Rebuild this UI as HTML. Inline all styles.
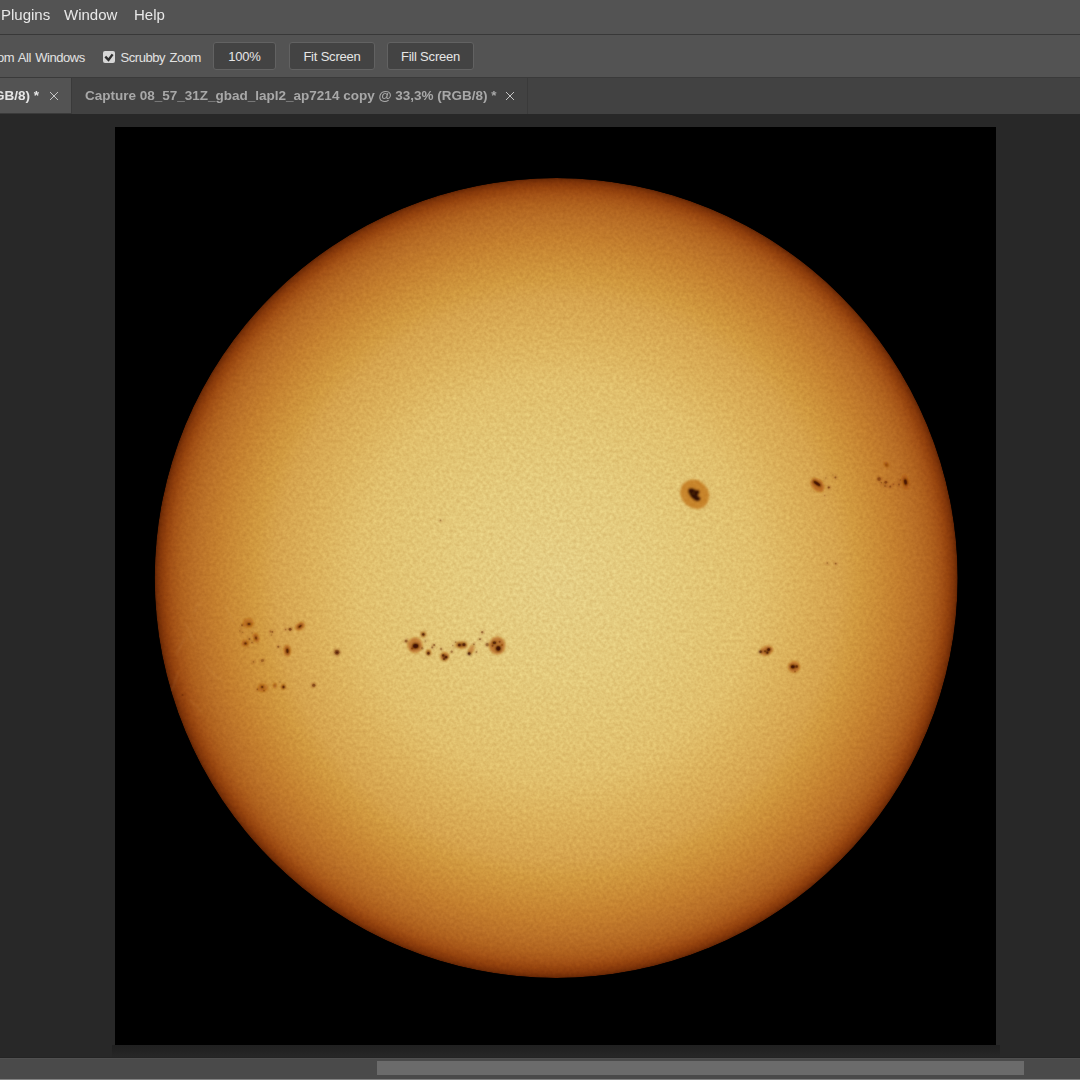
<!DOCTYPE html>
<html><head><meta charset="utf-8">
<style>
*{margin:0;padding:0;box-sizing:border-box}
html,body{width:1080px;height:1080px;overflow:hidden;background:#282828;font-family:"Liberation Sans",sans-serif;position:relative}
.abs{position:absolute}
#menu{left:0;top:0;width:1080px;height:34px;background:#535353}
#menuline{left:0;top:34px;width:1080px;height:1px;background:#383838}
#tool{left:0;top:35px;width:1080px;height:42px;background:#535353}
#toolline{left:0;top:77px;width:1080px;height:1px;background:#3a3a3a}
#tabs{left:0;top:78px;width:1080px;height:36px;background:#424242}
.mi{position:absolute;top:-2px;will-change:transform;height:34px;line-height:34px;font-size:15px;color:#e8e8e8;white-space:nowrap}
.tt{position:absolute;font-size:13px;letter-spacing:-0.45px;word-spacing:1.2px;color:#e2e2e2;white-space:nowrap}
.btn{position:absolute;top:42px;height:28px;border:1px solid #626262;border-radius:3px;background:#434343;color:#e6e6e6;font-size:13px;text-align:center;line-height:27px;letter-spacing:-0.2px}
.tab{position:absolute;will-change:transform;font-weight:bold;font-size:13.5px;white-space:nowrap}
#canvas{left:0;top:114px;width:1080px;height:944px;background:#282828}
#img{left:115px;top:127px;width:881px;height:918px;background:#000}
#scroll{left:0;top:1058px;width:1080px;height:21px;background:#4a4a4a}
#thumb{left:377px;top:1061px;width:647px;height:14px;background:#6b6b6b}
#bot{left:0;top:1079px;width:1080px;height:1px;background:#828282}
</style></head>
<body>
<div id="menu" class="abs"></div>
<div id="menuline" class="abs"></div>
<div class="mi" style="left:1px">Plugins</div>
<div class="mi" style="left:64px">Window</div>
<div class="mi" style="left:134px">Help</div>
<div id="tool" class="abs"></div>
<div id="toolline" class="abs"></div>
<div class="tt" style="left:-3px;top:50px">om All Windows</div>
<div class="abs" style="left:103px;top:51px;width:12px;height:12px;background:#d6d6d6;border-radius:2px"></div>
<svg class="abs" style="left:103px;top:51px" width="12" height="12" viewBox="0 0 12 12"><path d="M2.3 5.7 L5.5 8.9 L9.6 3.4" stroke="#2e2e2e" stroke-width="2.4" stroke-linejoin="miter" fill="none"/></svg>
<div class="tt" style="left:120.5px;top:50px">Scrubby Zoom</div>
<div class="btn" style="left:213px;width:63px">100%</div>
<div class="btn" style="left:289px;width:86px">Fit Screen</div>
<div class="btn" style="left:387px;width:87px">Fill Screen</div>
<div id="tabs" class="abs"></div>
<div class="abs" style="left:0;top:78px;width:71px;height:35px;background:#535353"></div>
<div class="abs" style="left:71px;top:78px;width:1px;height:36px;background:#3a3a3a"></div>
<div class="abs" style="left:527px;top:78px;width:1px;height:36px;background:#3a3a3a"></div>
<div class="abs" style="left:0;top:113px;width:72px;height:1px;background:#3a3a3a"></div>
<div class="tab" style="left:-6px;top:88px;color:#e6e6e6">GB/8) *</div>
<svg class="abs" style="left:50px;top:92px" width="8" height="8" viewBox="0 0 8 8" fill="#c4c4c4"><rect x="0" y="0" width="1" height="1"/><rect x="7" y="0" width="1" height="1"/><rect x="1" y="1" width="1" height="1"/><rect x="6" y="1" width="1" height="1"/><rect x="2" y="2" width="1" height="1"/><rect x="5" y="2" width="1" height="1"/><rect x="3" y="3" width="1" height="1"/><rect x="4" y="3" width="1" height="1"/><rect x="4" y="4" width="1" height="1"/><rect x="3" y="4" width="1" height="1"/><rect x="5" y="5" width="1" height="1"/><rect x="2" y="5" width="1" height="1"/><rect x="6" y="6" width="1" height="1"/><rect x="1" y="6" width="1" height="1"/><rect x="7" y="7" width="1" height="1"/><rect x="0" y="7" width="1" height="1"/></svg>
<div class="tab" style="left:85px;top:88px;color:#a8a8a8">Capture 08_57_31Z_gbad_lapl2_ap7214 copy @ 33,3% (RGB/8) *</div>
<svg class="abs" style="left:506px;top:92px" width="8" height="8" viewBox="0 0 8 8" fill="#c4c4c4"><rect x="0" y="0" width="1" height="1"/><rect x="7" y="0" width="1" height="1"/><rect x="1" y="1" width="1" height="1"/><rect x="6" y="1" width="1" height="1"/><rect x="2" y="2" width="1" height="1"/><rect x="5" y="2" width="1" height="1"/><rect x="3" y="3" width="1" height="1"/><rect x="4" y="3" width="1" height="1"/><rect x="4" y="4" width="1" height="1"/><rect x="3" y="4" width="1" height="1"/><rect x="5" y="5" width="1" height="1"/><rect x="2" y="5" width="1" height="1"/><rect x="6" y="6" width="1" height="1"/><rect x="1" y="6" width="1" height="1"/><rect x="7" y="7" width="1" height="1"/><rect x="0" y="7" width="1" height="1"/></svg>
<div id="canvas" class="abs"></div>
<div class="abs" style="left:112px;top:1045px;width:888px;height:12px;background:linear-gradient(#202020,#232323 50%,#272727)"></div>
<div id="img" class="abs"></div>
<svg class="abs" style="left:0;top:0" width="1080" height="1080" viewBox="0 0 1080 1080">
<defs>
<radialGradient id="sun" cx="556.2" cy="578" r="401.5" gradientUnits="userSpaceOnUse" gradientTransform="translate(556.2 578) scale(1 0.9963) translate(-556.2 -578)">
<stop offset="0" stop-color="#e5ce85"/>
<stop offset="0.25" stop-color="#e4ca7c"/>
<stop offset="0.4" stop-color="#e2c473"/>
<stop offset="0.5" stop-color="#e1bf6c"/>
<stop offset="0.6" stop-color="#dcb25c"/>
<stop offset="0.7" stop-color="#d6a44e"/>
<stop offset="0.75" stop-color="#d19a40"/>
<stop offset="0.8" stop-color="#cb8d37"/>
<stop offset="0.85" stop-color="#c47f2e"/>
<stop offset="0.9" stop-color="#ba7027"/>
<stop offset="0.935" stop-color="#b0621e"/>
<stop offset="0.96" stop-color="#a45216"/>
<stop offset="0.975" stop-color="#96440e"/>
<stop offset="0.987" stop-color="#86380a"/>
<stop offset="0.995" stop-color="#742e06"/>
<stop offset="1" stop-color="#602204"/>
</radialGradient>
<filter id="soft" x="-20%" y="-20%" width="140%" height="140%"><feGaussianBlur stdDeviation="0.8"/></filter>
<filter id="grain" x="0" y="0" width="100%" height="100%" color-interpolation-filters="sRGB"><feTurbulence type="fractalNoise" baseFrequency="0.3" numOctaves="2" seed="7" result="n"/><feColorMatrix in="n" type="matrix" values="0.6 0 0 0 0.2  1 0 0 0 0  1.6 0 0 0 -0.3  0 0 0 0 1" result="g"/><feComposite in="SourceGraphic" in2="g" operator="arithmetic" k1="0.2" k2="0.9" k3="0" k4="0" result="m"/><feComposite in="m" in2="SourceAlpha" operator="in"/></filter>
</defs>
<ellipse cx="556.2" cy="578" rx="401.5" ry="400" fill="url(#sun)" filter="url(#grain)"/>
<g fill="none" stroke="#f0c878" stroke-opacity="0.12" stroke-width="1.6" stroke-linecap="round" filter="url(#soft)">
<path d="M176.7 654 Q180 645 185 638"/>
<path d="M185 623 Q190 632 193 641"/>
<path d="M206 666 Q214 674 222 681"/>
<path d="M225 606 Q229 613 233 621"/>
<path d="M194 612 Q197 606 201 602"/>
<path d="M172 690 Q176 680 178 672"/>
<path d="M190 700 Q196 706 202 712"/>
</g>
<circle cx="182.5" cy="695" r="1" fill="#6a2806" fill-opacity="0.5"/>
<g filter="url(#soft)">
<path d="M680.2 490.7 L682.4 484.4 L687.2 481 L691.7 479.6 L698 479.9 L702.8 483.3 L707.6 488.8 L709.4 494.7 L708.3 501.8 L704.6 506.6 L698 509.2 L691.7 508.1 L686.1 504.7 L682.4 499.9 L680.6 495.5 Z" fill="#b8600a" fill-opacity="0.62"/>
<path d="M688.22 489.56 L689.81 488.26 L692.78 488.26 L695 489.56 L696.11 490.3 L697.22 489.74 L699.07 490.3 L699.63 492.52 L698.7 494.37 L697.22 495.3 L698.7 496.22 L700.37 497.7 L700.56 499.56 L699.07 501.04 L696.48 501.22 L693.52 499.56 L690.93 496.96 L689.07 494 L688.15 491.41 Z" fill="#2a0802" fill-opacity="0.96"/>
<path d="M691.85 493.63 L695 492.7" stroke="#a0581c" stroke-opacity="0.55" stroke-width="0.9"/>
<ellipse cx="817.5" cy="485" rx="8" ry="5.5" fill="#b0580c" fill-opacity="0.72" transform="rotate(45 817.5 485)"/>
<ellipse cx="817" cy="483.5" rx="5" ry="1.8" fill="#3a0c02" fill-opacity="0.9" transform="rotate(35 817 483.5)"/>
<circle cx="825.8" cy="477.9" r="1" fill="#7a2c06" fill-opacity="0.3"/>
<circle cx="832.9" cy="475" r="1" fill="#7a2c06" fill-opacity="0.3"/>
<circle cx="835.4" cy="477.5" r="1.2" fill="#7a2c06" fill-opacity="0.6"/>
<circle cx="828.75" cy="487.5" r="1.4" fill="#7a2c06" fill-opacity="0.7"/>
<circle cx="824.6" cy="495.4" r="1" fill="#7a2c06" fill-opacity="0.25"/>
<ellipse cx="905.5" cy="482" rx="3.4" ry="7.6" fill="#b0580c" fill-opacity="0.72" transform="rotate(-10 905.5 482)"/>
<ellipse cx="905.5" cy="482" rx="1.8" ry="3.5" fill="#3a0c02" fill-opacity="0.9" transform="rotate(-10 905.5 482)"/>
<ellipse cx="886.5" cy="464.7" rx="2" ry="3" fill="#b0580c" fill-opacity="0.85" transform="rotate(-30 886.5 464.7)"/>
<ellipse cx="886.6" cy="465" rx="1" ry="1.8" fill="#3a0c02" fill-opacity="0.5" transform="rotate(-30 886.6 465)"/>
<circle cx="879.1" cy="479.1" r="2.4" fill="#7a2c06" fill-opacity="0.5"/>
<circle cx="885.8" cy="482.3" r="1.8" fill="#7a2c06" fill-opacity="0.6"/>
<circle cx="881.4" cy="482.8" r="1" fill="#7a2c06" fill-opacity="0.5"/>
<circle cx="885.1" cy="486" r="1.8" fill="#7a2c06" fill-opacity="0.3"/>
<circle cx="890.2" cy="486.5" r="1.2" fill="#7a2c06" fill-opacity="0.55"/>
<circle cx="893.5" cy="484.2" r="1" fill="#7a2c06" fill-opacity="0.3"/>
<circle cx="899" cy="484.6" r="1.4" fill="#7a2c06" fill-opacity="0.45"/>
<circle cx="900.4" cy="480" r="1.2" fill="#7a2c06" fill-opacity="0.3"/>
<circle cx="827.3" cy="563" r="1.1" fill="#7a2c06" fill-opacity="0.45"/>
<circle cx="835.7" cy="563.6" r="1.2" fill="#7a2c06" fill-opacity="0.55"/>
<circle cx="440.6" cy="520.4" r="1.1" fill="#7a2c06" fill-opacity="0.45"/>
<ellipse cx="248.3" cy="623.3" rx="5.5" ry="5" fill="#b0580c" fill-opacity="0.59"/>
<ellipse cx="249" cy="624" rx="2.2" ry="1.6" fill="#3a0c02" fill-opacity="0.7"/>
<circle cx="242" cy="625.2" r="1.3" fill="#7a2c06" fill-opacity="0.5"/>
<ellipse cx="256.1" cy="637.8" rx="2.8" ry="4.6" fill="#b0580c" fill-opacity="0.78" transform="rotate(-15 256.1 637.8)"/>
<ellipse cx="256" cy="638" rx="1.2" ry="2" fill="#3a0c02" fill-opacity="0.6" transform="rotate(-15 256 638)"/>
<ellipse cx="245.3" cy="643.3" rx="3.6" ry="3.2" fill="#b0580c" fill-opacity="0.65"/>
<ellipse cx="245.5" cy="643.5" rx="1.6" ry="1.4" fill="#3a0c02" fill-opacity="0.7"/>
<circle cx="249.4" cy="638.9" r="1.3" fill="#7a2c06" fill-opacity="0.5"/>
<circle cx="252" cy="642.6" r="1.1" fill="#7a2c06" fill-opacity="0.5"/>
<circle cx="252" cy="633" r="0.9" fill="#7a2c06" fill-opacity="0.35"/>
<circle cx="239.8" cy="631.1" r="1" fill="#7a2c06" fill-opacity="0.35"/>
<circle cx="242.7" cy="632.2" r="1" fill="#7a2c06" fill-opacity="0.35"/>
<circle cx="270.5" cy="631.5" r="1.2" fill="#7a2c06" fill-opacity="0.3"/>
<circle cx="272.4" cy="631.9" r="1.1" fill="#7a2c06" fill-opacity="0.6"/>
<circle cx="271.3" cy="635.2" r="1.1" fill="#7a2c06" fill-opacity="0.3"/>
<circle cx="290.1" cy="629.3" r="1.8" fill="#7a2c06" fill-opacity="0.75"/>
<circle cx="285.7" cy="629.6" r="1.1" fill="#7a2c06" fill-opacity="0.4"/>
<ellipse cx="300.1" cy="626.3" rx="5" ry="3.6" fill="#b0580c" fill-opacity="0.78" transform="rotate(-35 300.1 626.3)"/>
<ellipse cx="300" cy="626.3" rx="2.6" ry="1.1" fill="#3a0c02" fill-opacity="0.85" transform="rotate(-35 300 626.3)"/>
<ellipse cx="287.2" cy="650.7" rx="3.6" ry="5.6" fill="#b0580c" fill-opacity="0.78" transform="rotate(-5 287.2 650.7)"/>
<ellipse cx="287.4" cy="650.9" rx="1.5" ry="3" fill="#3a0c02" fill-opacity="0.85" transform="rotate(-5 287.4 650.9)"/>
<circle cx="278.3" cy="646.7" r="1.3" fill="#7a2c06" fill-opacity="0.6"/>
<circle cx="262.4" cy="660.4" r="2" fill="#7a2c06" fill-opacity="0.4"/>
<circle cx="253.5" cy="661.9" r="1.2" fill="#7a2c06" fill-opacity="0.4"/>
<circle cx="337" cy="652.3" r="3.2" fill="#7a2c06" fill-opacity="0.55"/>
<ellipse cx="337" cy="652.5" rx="1.6" ry="1.5" fill="#3a0c02" fill-opacity="0.7"/>
<ellipse cx="262.6" cy="687.8" rx="5" ry="4" fill="#b0580c" fill-opacity="0.59"/>
<ellipse cx="262.2" cy="687" rx="1.5" ry="1.5" fill="#3a0c02" fill-opacity="0.7"/>
<circle cx="264" cy="690.7" r="1" fill="#7a2c06" fill-opacity="0.6"/>
<circle cx="257.4" cy="689.3" r="1.1" fill="#7a2c06" fill-opacity="0.5"/>
<ellipse cx="274.8" cy="685.6" rx="1.6" ry="2.6" fill="#b0580c" fill-opacity="0.85"/>
<ellipse cx="274.8" cy="685.6" rx="0.8" ry="1.3" fill="#3a0c02" fill-opacity="0.4"/>
<ellipse cx="283.3" cy="686.7" rx="2.2" ry="2.8" fill="#b0580c" fill-opacity="0.78"/>
<ellipse cx="283.5" cy="687" rx="1.3" ry="1.8" fill="#3a0c02" fill-opacity="0.85"/>
<circle cx="280" cy="681.9" r="1" fill="#7a2c06" fill-opacity="0.3"/>
<circle cx="313.7" cy="685.2" r="2" fill="#7a2c06" fill-opacity="0.7"/>
<ellipse cx="415" cy="645.2" rx="7.5" ry="7.8" fill="#b0580c" fill-opacity="0.65"/>
<ellipse cx="415.6" cy="646.1" rx="3.6" ry="3.0" fill="#3a0c02" fill-opacity="0.9"/>
<circle cx="412" cy="648.5" r="1.5" fill="#7a2c06" fill-opacity="0.5"/>
<ellipse cx="423.3" cy="634.4" rx="2.8" ry="2.8" fill="#b0580c" fill-opacity="0.65"/>
<ellipse cx="423.3" cy="634.4" rx="1.7" ry="1.6" fill="#3a0c02" fill-opacity="0.85"/>
<circle cx="406.1" cy="641.1" r="1.9" fill="#7a2c06" fill-opacity="0.55"/>
<ellipse cx="428.6" cy="652.6" rx="2.8" ry="3.2" fill="#b0580c" fill-opacity="0.65"/>
<ellipse cx="428.4" cy="653.3" rx="1.6" ry="2.0" fill="#3a0c02" fill-opacity="0.8"/>
<circle cx="434.2" cy="645" r="1.3" fill="#7a2c06" fill-opacity="0.6"/>
<circle cx="432.2" cy="647.5" r="1.3" fill="#7a2c06" fill-opacity="0.55"/>
<circle cx="422.2" cy="648.3" r="1.6" fill="#7a2c06" fill-opacity="0.35"/>
<circle cx="425.5" cy="641" r="1.1" fill="#7a2c06" fill-opacity="0.4"/>
<ellipse cx="444.6" cy="656.5" rx="4.4" ry="4.2" fill="#b0580c" fill-opacity="0.72"/>
<ellipse cx="443.2" cy="655.4" rx="1.6" ry="1.5" fill="#3a0c02" fill-opacity="0.85"/>
<ellipse cx="446.2" cy="657.2" rx="1.7" ry="1.6" fill="#3a0c02" fill-opacity="0.9"/>
<ellipse cx="444" cy="659" rx="1.4" ry="1.2" fill="#3a0c02" fill-opacity="0.8"/>
<circle cx="441.1" cy="648.9" r="1.5" fill="#7a2c06" fill-opacity="0.4"/>
<circle cx="451.7" cy="651.7" r="1.5" fill="#7a2c06" fill-opacity="0.45"/>
<circle cx="452.8" cy="645.5" r="1.1" fill="#7a2c06" fill-opacity="0.35"/>
<ellipse cx="461.5" cy="645" rx="6.2" ry="3.8" fill="#b0580c" fill-opacity="0.65"/>
<ellipse cx="459.4" cy="645" rx="1.9" ry="1.9" fill="#3a0c02" fill-opacity="0.8"/>
<ellipse cx="463.9" cy="644.7" rx="2.1" ry="1.9" fill="#3a0c02" fill-opacity="0.85"/>
<ellipse cx="471" cy="650" rx="2.6" ry="5" fill="#b0580c" fill-opacity="0.59" transform="rotate(25 471 650)"/>
<ellipse cx="469.2" cy="653.6" rx="1.8" ry="1.8" fill="#3a0c02" fill-opacity="0.85"/>
<circle cx="473.9" cy="644.4" r="1.1" fill="#7a2c06" fill-opacity="0.5"/>
<circle cx="480" cy="639.2" r="1.2" fill="#7a2c06" fill-opacity="0.6"/>
<circle cx="482.2" cy="632.2" r="1.5" fill="#7a2c06" fill-opacity="0.55"/>
<circle cx="455.6" cy="642.2" r="1.1" fill="#7a2c06" fill-opacity="0.4"/>
<circle cx="476.5" cy="652" r="1.2" fill="#7a2c06" fill-opacity="0.4"/>
<ellipse cx="497.2" cy="645.6" rx="8.2" ry="9.0" fill="#b0580c" fill-opacity="0.68"/>
<ellipse cx="498.3" cy="648.4" rx="2.8" ry="3.0" fill="#3a0c02" fill-opacity="0.95"/>
<ellipse cx="494.4" cy="642.8" rx="2.4" ry="1.8" fill="#3a0c02" fill-opacity="0.8"/>
<circle cx="499.6" cy="641.8" r="1.3" fill="#7a2c06" fill-opacity="0.65"/>
<circle cx="492.6" cy="645.8" r="1.3" fill="#7a2c06" fill-opacity="0.6"/>
<circle cx="502" cy="645" r="1.2" fill="#7a2c06" fill-opacity="0.4"/>
<circle cx="487.2" cy="644.7" r="2.1" fill="#7a2c06" fill-opacity="0.45"/>
<ellipse cx="766.5" cy="650.6" rx="6.8" ry="4.6" fill="#b0580c" fill-opacity="0.65" transform="rotate(-20 766.5 650.6)"/>
<ellipse cx="768.7" cy="649.6" rx="2.0" ry="1.9" fill="#3a0c02" fill-opacity="0.95"/>
<ellipse cx="767.4" cy="652.8" rx="1.5" ry="1.5" fill="#3a0c02" fill-opacity="0.85"/>
<ellipse cx="760.6" cy="651.7" rx="1.7" ry="1.7" fill="#3a0c02" fill-opacity="0.75"/>
<ellipse cx="765" cy="651.2" rx="1.2" ry="1.2" fill="#3a0c02" fill-opacity="0.7"/>
<ellipse cx="794" cy="667" rx="6" ry="5.8" fill="#b0580c" fill-opacity="0.65"/>
<ellipse cx="792.8" cy="666.8" rx="2.6" ry="2.2" fill="#3a0c02" fill-opacity="0.95"/>
<ellipse cx="796.8" cy="666.5" rx="1.4" ry="1.8" fill="#3a0c02" fill-opacity="0.75"/>
<circle cx="795" cy="671.5" r="1.2" fill="#7a2c06" fill-opacity="0.4"/>

</g>
<g id="cores">
<ellipse cx="817" cy="483.5" rx="3.5" ry="1.26" fill="#3a0c02" fill-opacity="0.5" transform="rotate(35 817 483.5)"/>
<circle cx="825.8" cy="477.9" r="0.75" fill="#5a1e04" fill-opacity="0.18"/>
<circle cx="832.9" cy="475" r="0.75" fill="#5a1e04" fill-opacity="0.18"/>
<circle cx="835.4" cy="477.5" r="0.9" fill="#5a1e04" fill-opacity="0.36"/>
<circle cx="828.75" cy="487.5" r="1.05" fill="#5a1e04" fill-opacity="0.42"/>
<circle cx="824.6" cy="495.4" r="0.75" fill="#5a1e04" fill-opacity="0.15"/>
<ellipse cx="905.5" cy="482" rx="1.26" ry="2.45" fill="#3a0c02" fill-opacity="0.5" transform="rotate(-10 905.5 482)"/>
<circle cx="879.1" cy="479.1" r="1.8" fill="#5a1e04" fill-opacity="0.3"/>
<circle cx="885.8" cy="482.3" r="1.35" fill="#5a1e04" fill-opacity="0.36"/>
<circle cx="881.4" cy="482.8" r="0.75" fill="#5a1e04" fill-opacity="0.3"/>
<circle cx="885.1" cy="486" r="1.35" fill="#5a1e04" fill-opacity="0.18"/>
<circle cx="890.2" cy="486.5" r="0.9" fill="#5a1e04" fill-opacity="0.33"/>
<circle cx="893.5" cy="484.2" r="0.75" fill="#5a1e04" fill-opacity="0.18"/>
<circle cx="899" cy="484.6" r="1.05" fill="#5a1e04" fill-opacity="0.27"/>
<circle cx="900.4" cy="480" r="0.9" fill="#5a1e04" fill-opacity="0.18"/>
<circle cx="827.3" cy="563" r="0.83" fill="#5a1e04" fill-opacity="0.27"/>
<circle cx="835.7" cy="563.6" r="0.9" fill="#5a1e04" fill-opacity="0.33"/>
<circle cx="440.6" cy="520.4" r="0.83" fill="#5a1e04" fill-opacity="0.27"/>
<ellipse cx="249" cy="624" rx="1.54" ry="1.12" fill="#3a0c02" fill-opacity="0.39"/>
<circle cx="242" cy="625.2" r="0.98" fill="#5a1e04" fill-opacity="0.3"/>
<ellipse cx="256" cy="638" rx="0.84" ry="1.4" fill="#3a0c02" fill-opacity="0.33" transform="rotate(-15 256 638)"/>
<ellipse cx="245.5" cy="643.5" rx="1.12" ry="0.98" fill="#3a0c02" fill-opacity="0.39"/>
<circle cx="249.4" cy="638.9" r="0.98" fill="#5a1e04" fill-opacity="0.3"/>
<circle cx="252" cy="642.6" r="0.83" fill="#5a1e04" fill-opacity="0.3"/>
<circle cx="252" cy="633" r="0.68" fill="#5a1e04" fill-opacity="0.21"/>
<circle cx="239.8" cy="631.1" r="0.75" fill="#5a1e04" fill-opacity="0.21"/>
<circle cx="242.7" cy="632.2" r="0.75" fill="#5a1e04" fill-opacity="0.21"/>
<circle cx="270.5" cy="631.5" r="0.9" fill="#5a1e04" fill-opacity="0.18"/>
<circle cx="272.4" cy="631.9" r="0.83" fill="#5a1e04" fill-opacity="0.36"/>
<circle cx="271.3" cy="635.2" r="0.83" fill="#5a1e04" fill-opacity="0.18"/>
<circle cx="290.1" cy="629.3" r="1.35" fill="#5a1e04" fill-opacity="0.45"/>
<circle cx="285.7" cy="629.6" r="0.83" fill="#5a1e04" fill-opacity="0.24"/>
<ellipse cx="300" cy="626.3" rx="1.82" ry="0.77" fill="#3a0c02" fill-opacity="0.47" transform="rotate(-35 300 626.3)"/>
<ellipse cx="287.4" cy="650.9" rx="1.05" ry="2.1" fill="#3a0c02" fill-opacity="0.47" transform="rotate(-5 287.4 650.9)"/>
<circle cx="278.3" cy="646.7" r="0.98" fill="#5a1e04" fill-opacity="0.36"/>
<circle cx="262.4" cy="660.4" r="1.5" fill="#5a1e04" fill-opacity="0.24"/>
<circle cx="253.5" cy="661.9" r="0.9" fill="#5a1e04" fill-opacity="0.24"/>
<circle cx="337" cy="652.3" r="2.4" fill="#5a1e04" fill-opacity="0.33"/>
<ellipse cx="337" cy="652.5" rx="1.12" ry="1.05" fill="#3a0c02" fill-opacity="0.39"/>
<ellipse cx="262.2" cy="687" rx="1.05" ry="1.05" fill="#3a0c02" fill-opacity="0.39"/>
<circle cx="264" cy="690.7" r="0.75" fill="#5a1e04" fill-opacity="0.36"/>
<circle cx="257.4" cy="689.3" r="0.83" fill="#5a1e04" fill-opacity="0.3"/>
<ellipse cx="283.5" cy="687" rx="0.91" ry="1.26" fill="#3a0c02" fill-opacity="0.47"/>
<circle cx="280" cy="681.9" r="0.75" fill="#5a1e04" fill-opacity="0.18"/>
<circle cx="313.7" cy="685.2" r="1.5" fill="#5a1e04" fill-opacity="0.42"/>
<ellipse cx="415.6" cy="646.1" rx="2.52" ry="2.1" fill="#3a0c02" fill-opacity="0.5"/>
<circle cx="412" cy="648.5" r="1.12" fill="#5a1e04" fill-opacity="0.3"/>
<ellipse cx="423.3" cy="634.4" rx="1.19" ry="1.12" fill="#3a0c02" fill-opacity="0.47"/>
<circle cx="406.1" cy="641.1" r="1.42" fill="#5a1e04" fill-opacity="0.33"/>
<ellipse cx="428.4" cy="653.3" rx="1.12" ry="1.4" fill="#3a0c02" fill-opacity="0.44"/>
<circle cx="434.2" cy="645" r="0.98" fill="#5a1e04" fill-opacity="0.36"/>
<circle cx="432.2" cy="647.5" r="0.98" fill="#5a1e04" fill-opacity="0.33"/>
<circle cx="422.2" cy="648.3" r="1.2" fill="#5a1e04" fill-opacity="0.21"/>
<circle cx="425.5" cy="641" r="0.83" fill="#5a1e04" fill-opacity="0.24"/>
<ellipse cx="443.2" cy="655.4" rx="1.12" ry="1.05" fill="#3a0c02" fill-opacity="0.47"/>
<ellipse cx="446.2" cy="657.2" rx="1.19" ry="1.12" fill="#3a0c02" fill-opacity="0.5"/>
<ellipse cx="444" cy="659" rx="0.98" ry="0.84" fill="#3a0c02" fill-opacity="0.44"/>
<circle cx="441.1" cy="648.9" r="1.12" fill="#5a1e04" fill-opacity="0.24"/>
<circle cx="451.7" cy="651.7" r="1.12" fill="#5a1e04" fill-opacity="0.27"/>
<circle cx="452.8" cy="645.5" r="0.83" fill="#5a1e04" fill-opacity="0.21"/>
<ellipse cx="459.4" cy="645" rx="1.33" ry="1.33" fill="#3a0c02" fill-opacity="0.44"/>
<ellipse cx="463.9" cy="644.7" rx="1.47" ry="1.33" fill="#3a0c02" fill-opacity="0.47"/>
<ellipse cx="469.2" cy="653.6" rx="1.26" ry="1.26" fill="#3a0c02" fill-opacity="0.47"/>
<circle cx="473.9" cy="644.4" r="0.83" fill="#5a1e04" fill-opacity="0.3"/>
<circle cx="480" cy="639.2" r="0.9" fill="#5a1e04" fill-opacity="0.36"/>
<circle cx="482.2" cy="632.2" r="1.12" fill="#5a1e04" fill-opacity="0.33"/>
<circle cx="455.6" cy="642.2" r="0.83" fill="#5a1e04" fill-opacity="0.24"/>
<circle cx="476.5" cy="652" r="0.9" fill="#5a1e04" fill-opacity="0.24"/>
<ellipse cx="498.3" cy="648.4" rx="1.96" ry="2.1" fill="#3a0c02" fill-opacity="0.52"/>
<ellipse cx="494.4" cy="642.8" rx="1.68" ry="1.26" fill="#3a0c02" fill-opacity="0.44"/>
<circle cx="499.6" cy="641.8" r="0.98" fill="#5a1e04" fill-opacity="0.39"/>
<circle cx="492.6" cy="645.8" r="0.98" fill="#5a1e04" fill-opacity="0.36"/>
<circle cx="502" cy="645" r="0.9" fill="#5a1e04" fill-opacity="0.24"/>
<circle cx="487.2" cy="644.7" r="1.58" fill="#5a1e04" fill-opacity="0.27"/>
<ellipse cx="768.7" cy="649.6" rx="1.4" ry="1.33" fill="#3a0c02" fill-opacity="0.52"/>
<ellipse cx="767.4" cy="652.8" rx="1.05" ry="1.05" fill="#3a0c02" fill-opacity="0.47"/>
<ellipse cx="760.6" cy="651.7" rx="1.19" ry="1.19" fill="#3a0c02" fill-opacity="0.41"/>
<ellipse cx="765" cy="651.2" rx="0.84" ry="0.84" fill="#3a0c02" fill-opacity="0.39"/>
<ellipse cx="792.8" cy="666.8" rx="1.82" ry="1.54" fill="#3a0c02" fill-opacity="0.52"/>
<ellipse cx="796.8" cy="666.5" rx="0.98" ry="1.26" fill="#3a0c02" fill-opacity="0.41"/>
<circle cx="795" cy="671.5" r="0.9" fill="#5a1e04" fill-opacity="0.24"/>
</g>
</svg>
<div class="abs" style="left:0;top:1057px;width:1080px;height:1px;background:#242424"></div>
<div id="scroll" class="abs"></div>
<div class="abs" style="left:0;top:1058px;width:1080px;height:1px;background:#505050"></div>
<div id="thumb" class="abs"></div>
<div id="bot" class="abs"></div>
</body></html>
